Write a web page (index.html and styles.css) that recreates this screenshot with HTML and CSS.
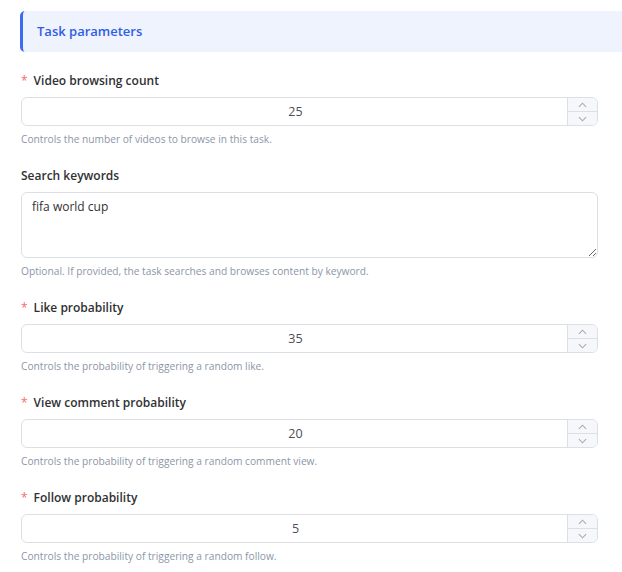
FILE: index.html
```html
<!DOCTYPE html>
<html lang="en">
<head>
  <meta charset="UTF-8">
  <title>Task parameters</title>
  <link rel="stylesheet" href="styles.css">
</head>
<body>
  <div class="panel">
    <div class="section-title">Task parameters</div>

    <form class="task-form">
      <div class="field">
        <label class="field-label required">Video browsing count</label>
        <div class="number-input">
          <input type="text" value="25">
          <div class="stepper">
            <span class="step"><svg viewBox="0 0 10 6" width="9" height="6"><path d="M1 5L5 1L9 5" /></svg></span>
            <span class="step"><svg viewBox="0 0 10 6" width="9" height="6"><path d="M1 1L5 5L9 1" /></svg></span>
          </div>
        </div>
        <div class="field-help">Controls the number of videos to browse in this task.</div>
      </div>

      <div class="field">
        <label class="field-label">Search keywords</label>
        <textarea class="textarea">fifa world cup</textarea>
        <div class="field-help">Optional. If provided, the task searches and browses content by keyword.</div>
      </div>

      <div class="field">
        <label class="field-label required">Like probability</label>
        <div class="number-input">
          <input type="text" value="35">
          <div class="stepper">
            <span class="step"><svg viewBox="0 0 10 6" width="9" height="6"><path d="M1 5L5 1L9 5" /></svg></span>
            <span class="step"><svg viewBox="0 0 10 6" width="9" height="6"><path d="M1 1L5 5L9 1" /></svg></span>
          </div>
        </div>
        <div class="field-help">Controls the probability of triggering a random like.</div>
      </div>

      <div class="field">
        <label class="field-label required">View comment probability</label>
        <div class="number-input">
          <input type="text" value="20">
          <div class="stepper">
            <span class="step"><svg viewBox="0 0 10 6" width="9" height="6"><path d="M1 5L5 1L9 5" /></svg></span>
            <span class="step"><svg viewBox="0 0 10 6" width="9" height="6"><path d="M1 1L5 5L9 1" /></svg></span>
          </div>
        </div>
        <div class="field-help">Controls the probability of triggering a random comment view.</div>
      </div>

      <div class="field">
        <label class="field-label required">Follow probability</label>
        <div class="number-input">
          <input type="text" value="5">
          <div class="stepper">
            <span class="step"><svg viewBox="0 0 10 6" width="9" height="6"><path d="M1 5L5 1L9 5" /></svg></span>
            <span class="step"><svg viewBox="0 0 10 6" width="9" height="6"><path d="M1 1L5 5L9 1" /></svg></span>
          </div>
        </div>
        <div class="field-help">Controls the probability of triggering a random follow.</div>
      </div>
    </form>
  </div>
</body>
</html>
```

FILE: styles.css
```css
body {
margin: 0;
background-color: #fff;
font-family: "Open Sans", "Noto Sans", sans-serif;
color: #303133;
overflow: hidden;
}

.panel {
padding: 11px 0 0 20px;
}

.section-title {
height: 41px;
line-height: 41px;
padding-left: 14px;
margin-right: -10px;
background-color: #eef3fe;
border-left: 3px solid #3b6cf0;
border-radius: 5px 0 0 5px;
color: #2f5ee6;
font-size: 13px;
font-weight: 600;
}

.task-form {
width: 577px;
padding-left: 1px;
margin-top: 19px;
}

.field {
margin-bottom: 19px;
}

.field-label {
display: block;
font-size: 12px;
font-weight: 600;
color: #303133;
line-height: 20px;
margin-bottom: 6px;
}

.field-label.required::before {
content: "*";
color: #f56c6c;
font-weight: 400;
margin-right: 6px;
}

.number-input {
display: flex;
height: 29px;
box-sizing: border-box;
border: 1px solid #dcdfe6;
border-radius: 6px;
overflow: hidden;
}

.number-input input {
flex: 1;
border: none;
outline: none;
text-align: center;
font-family: inherit;
font-size: 12.5px;
color: #4a4d55;
padding: 0 0 0 2px;
background: transparent;
}

.stepper {
width: 29px;
display: flex;
flex-direction: column;
border-left: 1px solid #dcdfe6;
background-color: #f5f7fa;
}

.step {
flex: 1;
display: flex;
align-items: center;
justify-content: center;
}

.step + .step {
border-top: 1px solid #dcdfe6;
}

.step svg path {
fill: none;
stroke: #a8abb2;
stroke-width: 1.2;
}

.textarea {
display: block;
width: 100%;
height: 66px;
box-sizing: border-box;
border: 1px solid #dcdfe6;
border-radius: 6px;
padding: 5px 10px;
font-family: inherit;
font-size: 12px;
color: #303133;
resize: vertical;
outline: none;
}

.field-help {
font-size: 10.2px;
color: #8c96a8;
line-height: 16px;
margin-top: 5px;
}
```
